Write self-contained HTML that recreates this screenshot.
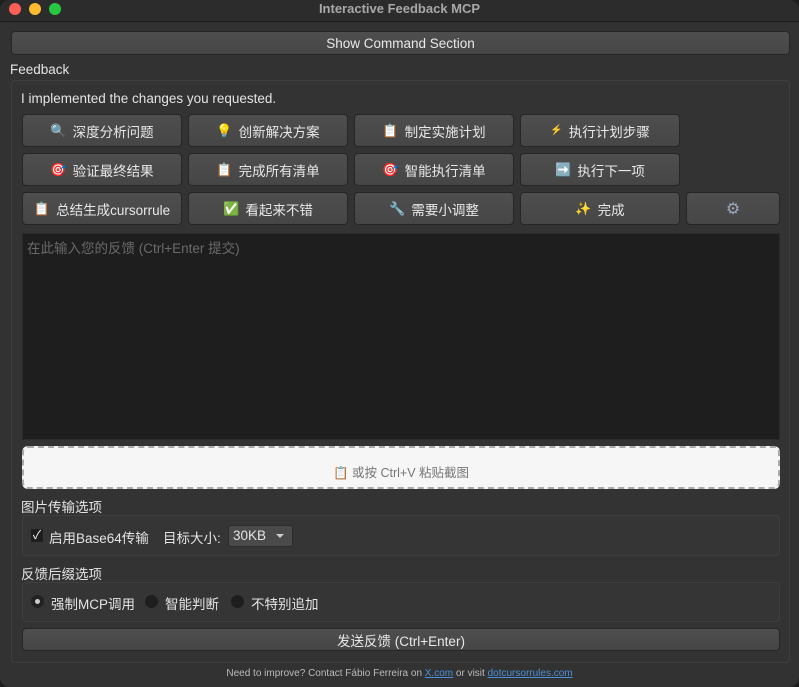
<!DOCTYPE html>
<html><head><meta charset="utf-8"><style>
*{margin:0;padding:0;box-sizing:border-box}
body{width:799px;height:687px;background:#1e1e1e;font-family:"Liberation Sans","Noto Sans CJK SC",sans-serif;color:#e4e4e4;font-size:13.5px;position:relative;overflow:hidden}
.win{position:absolute;left:0;top:0;width:799px;height:687px;background:#323232;border-radius:10px;overflow:hidden}
.title{position:absolute;left:0;top:0;width:799px;height:22px;background:#2c2c2c;border-bottom:1px solid #1c1c1c;text-align:center;font-weight:bold;font-size:13px;line-height:17px;color:#a8a8a8}
.dot{position:absolute;top:3px;width:12px;height:12px;border-radius:50%}
.a{position:absolute}
.btn{position:absolute;background:linear-gradient(#4e4e4e,#464646);border:1px solid #262626;border-radius:4px;text-align:center;color:#e8e8e8;font-size:13.5px;display:flex;align-items:center;justify-content:center;gap:6px}
.box{position:absolute;border:1px solid #3e3e3e;border-radius:4px;background:#353535}
.ic{font-size:13px}
</style></head><body>
<div class="win">
<div class="title">Interactive Feedback MCP</div>
<div class="dot" style="left:9px;background:#fe5f57"></div>
<div class="dot" style="left:29px;background:#febc2e"></div>
<div class="dot" style="left:49px;background:#28c840"></div>
<div class="btn" style="left:11px;top:31px;width:779px;height:24px">Show Command Section</div>
<div class="a" style="left:10px;top:62px">Feedback</div>
<div class="box" style="left:11px;top:80px;width:779px;height:583px;background:#333"></div>
<div class="a" style="left:21px;top:91px">I implemented the changes you requested.</div>

<div class="btn" style="left:22px;top:114px;width:160px;height:33px"><span class="ic">🔍</span>深度分析问题</div>
<div class="btn" style="left:188px;top:114px;width:160px;height:33px"><span class="ic">💡</span>创新解决方案</div>
<div class="btn" style="left:354px;top:114px;width:160px;height:33px"><span class="ic">📋</span>制定实施计划</div>
<div class="btn" style="left:520px;top:114px;width:160px;height:33px"><span class="ic" style="font-size:10px">⚡</span>执行计划步骤</div>

<div class="btn" style="left:22px;top:153px;width:160px;height:33px"><span class="ic">🎯</span>验证最终结果</div>
<div class="btn" style="left:188px;top:153px;width:160px;height:33px"><span class="ic">📋</span>完成所有清单</div>
<div class="btn" style="left:354px;top:153px;width:160px;height:33px"><span class="ic">🎯</span>智能执行清单</div>
<div class="btn" style="left:520px;top:153px;width:160px;height:33px"><span class="ic">➡️</span>执行下一项</div>

<div class="btn" style="left:22px;top:192px;width:160px;height:33px"><span class="ic">📋</span>总结生成cursorrule</div>
<div class="btn" style="left:188px;top:192px;width:160px;height:33px"><span class="ic">✅</span>看起来不错</div>
<div class="btn" style="left:354px;top:192px;width:160px;height:33px"><span class="ic">🔧</span>需要小调整</div>
<div class="btn" style="left:520px;top:192px;width:160px;height:33px"><span class="ic">✨</span>完成</div>
<div class="btn" style="left:686px;top:192px;width:94px;height:33px;color:#9ab"><span style="font-size:16px">⚙</span></div>

<div class="a" style="left:22px;top:233px;width:758px;height:207px;background:#1e1e1e;border:1px solid #2a2a2a;color:#6a6a6a;padding:3px 4px">在此输入您的反馈 (Ctrl+Enter 提交)</div>
<div class="a" style="left:22px;top:446px;width:758px;height:43px;background:#f6f6f6;border:2px dashed #aaa;border-radius:6px;color:#777;text-align:center;padding-top:14px;font-size:12.5px">📋 或按 Ctrl+V 粘贴截图</div>

<div class="a" style="left:21px;top:496px">图片传输选项</div>
<div class="box" style="left:22px;top:515px;width:758px;height:41px"></div>
<div class="a" style="left:31px;top:529px;width:12px;height:13px;background:#1e1e1e;color:#fff;font-size:12px;line-height:13px;text-align:center">✓</div>
<div class="a" style="left:49px;top:527px">启用Base64传输</div>
<div class="a" style="left:163px;top:527px">目标大小:</div>
<div class="a" style="left:228px;top:525px;width:65px;height:22px;background:#4a4a4a;border:1px solid #2a2a2a;border-radius:3px;padding:2px 4px">30KB<span style="position:absolute;right:8px;top:8px;border:4px solid transparent;border-top:4px solid #ccc"></span></div>

<div class="a" style="left:21px;top:563px">反馈后缀选项</div>
<div class="box" style="left:22px;top:582px;width:758px;height:40px"></div>
<div class="a" style="left:31px;top:595px;width:13px;height:13px;border-radius:50%;background:#222"><div style="margin:4px;width:5px;height:5px;border-radius:50%;background:#ccc"></div></div>
<div class="a" style="left:51px;top:593px">强制MCP调用</div>
<div class="a" style="left:145px;top:595px;width:13px;height:13px;border-radius:50%;background:#1e1e1e"></div>
<div class="a" style="left:165px;top:593px">智能判断</div>
<div class="a" style="left:231px;top:595px;width:13px;height:13px;border-radius:50%;background:#1e1e1e"></div>
<div class="a" style="left:251px;top:593px">不特别追加</div>

<div class="btn" style="left:22px;top:628px;width:758px;height:23px">发送反馈 (Ctrl+Enter)</div>
<div class="a" style="left:0;top:668px;width:799px;text-align:center;font-size:10px;color:#bbb">Need to improve? Contact Fábio Ferreira on <span style="color:#4a90d9;text-decoration:underline">X.com</span> or visit <span style="color:#4a90d9;text-decoration:underline">dotcursorrules.com</span></div>
</div>
</body></html>
